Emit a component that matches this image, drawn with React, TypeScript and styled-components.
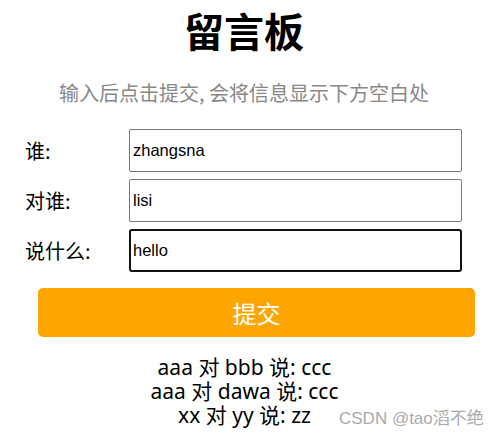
import styled, { createGlobalStyle } from 'styled-components'

const GlobalStyle = createGlobalStyle`
  html, body {
    margin: 0;
    padding: 0;
    background: #fff;
  }
  body {
    font-family: "Noto Sans", "Noto Sans CJK SC", sans-serif;
    color: #000;
  }
`

const Board = styled.div`
  position: relative;
  width: 500px;
  height: 438px;
  overflow: hidden;
`

const Title = styled.h1`
  margin: 0;
  padding-top: 6px;
  width: 488px;
  text-align: center;
  font-family: "Noto Sans CJK SC", sans-serif;
  font-size: 40px;
  line-height: 48px;
  font-weight: 700;
`

const Tip = styled.p`
  margin: 27px 0 0;
  width: 488px;
  text-align: center;
  color: #888;
  font-size: 20px;
  line-height: 24px;
  font-family: "Noto Sans CJK SC", sans-serif;
`

const Form = styled.div`
  display: flex;
  flex-direction: column;
  gap: 7px;
  margin-top: 24px;
`

const Row = styled.div`
  display: flex;
  align-items: center;
  padding-left: 25px;
`

const Label = styled.label`
  width: 104px;
  font-size: 20px;
  font-family: "Noto Sans CJK SC", sans-serif;
`

const Input = styled.input<{ $focus?: boolean }>`
  box-sizing: border-box;
  width: 333px;
  height: 43px;
  margin: 0;
  padding: 0 3px;
  border: ${(p) => (p.$focus ? '2px solid #111' : '1px solid #767676')};
  padding-left: ${(p) => (p.$focus ? '2px' : '3px')};
  border-radius: ${(p) => (p.$focus ? '3px' : '2px')};
  font-family: "Liberation Sans", Arial, sans-serif;
  font-size: 16.5px;
  color: #000;
  outline: none;
`

const SubmitButton = styled.button`
  display: block;
  box-sizing: border-box;
  margin: 16px 0 0 38px;
  width: 437px;
  height: 49px;
  border: none;
  border-radius: 5px;
  background: #ffa500;
  color: #fff;
  font-size: 24px;
  font-family: "Noto Sans CJK SC", sans-serif;
  cursor: pointer;
`

const List = styled.div`
  margin-top: 18px;
  width: 489px;
  text-align: center;
  font-size: 21px;
  line-height: 24px;
`

const Msg = styled.div`
  height: 24px;
`

const Watermark = styled.span`
  position: absolute;
  left: 339px;
  top: 408px;
  font-size: 17px;
  line-height: 22px;
  color: #aaa;
  font-family: "Liberation Sans", "Noto Sans CJK SC", sans-serif;
`

const messages = [
  { from: 'aaa', to: 'bbb', text: 'ccc' },
  { from: 'aaa', to: 'dawa', text: 'ccc' },
  { from: 'xx', to: 'yy', text: 'zz' },
]

const App = () => {
  return (
    <>
      <GlobalStyle />
      <Board>
        <Title>留言板</Title>
        <Tip>输入后点击提交, 会将信息显示下方空白处</Tip>
        <Form>
          <Row>
            <Label>谁:</Label>
            <Input defaultValue="zhangsna" />
          </Row>
          <Row>
            <Label>对谁:</Label>
            <Input defaultValue="lisi" />
          </Row>
          <Row>
            <Label>说什么:</Label>
            <Input $focus defaultValue="hello" />
          </Row>
        </Form>
        <SubmitButton>提交</SubmitButton>
        <List>
          {messages.map((m, i) => (
            <Msg key={i}>
              {m.from} 对 {m.to} 说: {m.text}
            </Msg>
          ))}
        </List>
        <Watermark>CSDN @tao滔不绝</Watermark>
      </Board>
    </>
  )
}

export default App
